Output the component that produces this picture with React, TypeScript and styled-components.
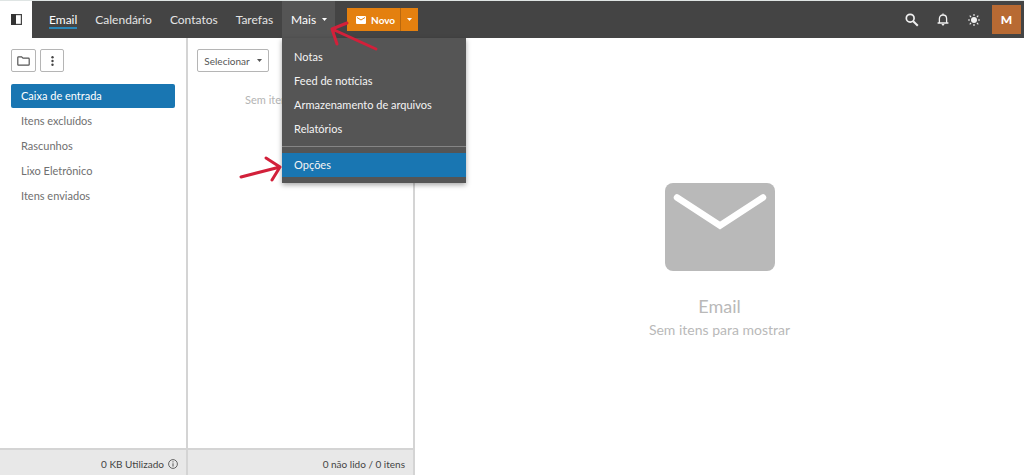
import React from "react";
import styled, { createGlobalStyle } from "styled-components";

const GlobalStyle = createGlobalStyle`
  * { box-sizing: border-box; }
  body {
    margin: 0;
    background: #fff;
    color: #666;
    font-family: Lato, "Open Sans", sans-serif;
    font-size: 11px;
    line-height: 16px;
  }
  button { font: inherit; margin: 0; padding: 0; border: 0; background: none; color: inherit; }
  ul { list-style: none; margin: 0; padding: 0; }
  a { color: inherit; text-decoration: none; }
  h2, p { margin: 0; font-weight: 400; }
  svg { display: block; flex: none; }
`;

const Page = styled.div`
  position: relative;
  display: flex;
  flex-direction: column;
  min-height: 100vh;
  border-top: 1px solid #dfe5e4;
`;

const TopBar = styled.header`
  display: flex;
  align-items: stretch;
  height: 37px;
  background: #444;
  color: #e8e8e8;
`;

const PanelToggle = styled.button`
  display: flex;
  align-items: center;
  justify-content: center;
  width: 32px;
  background: #fff;
`;

const MainNav = styled.nav`
  display: flex;
  align-items: center;
  gap: 18px;
  padding-left: 17px;
  font-size: 12px;
`;

const NavLink = styled.a<{ $active?: boolean }>`
  line-height: 14px;
  padding-top: 2px;
  color: ${(p) => (p.$active ? "#fff" : "#e4e4e4")};
  border-bottom: 2px solid ${(p) => (p.$active ? "#2a86b8" : "transparent")};
`;

const MoreWrap = styled.div`
  position: relative;
  margin-left: 9px;
`;

const MoreButton = styled.button`
  display: flex;
  align-items: center;
  gap: 6px;
  width: 53px;
  height: 37px;
  padding-left: 9px;
  background: #555;
  color: #fff;
  font-size: 12px;
`;

const Menu = styled.ul`
  position: absolute;
  z-index: 2;
  top: 37px;
  left: 0;
  width: 184px;
  background: #555;
  color: #f4f4f4;
  box-shadow: 0 2px 5px rgba(0, 0, 0, 0.35);
  && { padding: 7px 0 6px; }
`;

const MenuItem = styled.li<{ $selected?: boolean }>`
  background: ${(p) => (p.$selected ? "#1976b2" : "transparent")};
`;

const MenuLink = styled.a`
  display: block;
  padding: 4px 12px;
`;

const MenuDivider = styled.li`
  height: 1px;
  margin: 5px 0 6px;
  background: #858585;
`;

const NewGroup = styled.div`
  display: flex;
  align-self: center;
  height: 23px;
  margin-left: 12px;
  background: #e4800f;
  color: #fff;
`;

const NewButton = styled.button`
  display: flex;
  align-items: center;
  gap: 5px;
  width: 53px;
  padding-left: 9px;
  font-weight: 700;
  font-size: 10px;
`;

const NewMore = styled.button`
  display: flex;
  align-items: center;
  justify-content: center;
  width: 18px;
  border-left: 1px solid #b9680e;
`;

const Tools = styled.div`
  display: flex;
  align-items: center;
  margin-left: auto;
  padding-right: 3px;
`;

const ToolButton = styled.button`
  display: flex;
  align-items: center;
  justify-content: center;
  width: 31px;
  height: 28px;
  color: #f0f0f0;
`;

const Avatar = styled.button`
  width: 29px;
  height: 29px;
  margin-left: 3px;
  background: #b86a33;
  color: #fff;
  font-size: 12px;
  font-weight: 900;
`;

const Body = styled.div`
  display: flex;
  flex: 1;
`;

const Column = styled.section<{ $width: number }>`
  display: flex;
  flex-direction: column;
  flex: none;
  width: ${(p) => p.$width}px;
  border-right: 2px solid #d4d4d4;
`;

const Toolbar = styled.div<{ $inset: number }>`
  display: flex;
  gap: 4px;
  padding: 11px ${(p) => p.$inset}px 12px;
`;

const OutlineButton = styled.button`
  display: flex;
  align-items: center;
  justify-content: center;
  gap: 7px;
  min-width: 24px;
  height: 23px;
  padding: 0 5px;
  border: 1px solid #b5b5b5;
  border-radius: 2px;
  color: #555;
`;

const SelectButton = styled(OutlineButton)`
  width: 72px;
  font-size: 10px;
`;

const FolderList = styled.ul`
  display: flex;
  flex-direction: column;
  gap: 1px;
  && { padding: 0 11px; }
`;

const Folder = styled.a<{ $active?: boolean }>`
  display: block;
  padding: 4px 10px;
  border-radius: 2px;
  background: ${(p) => (p.$active ? "#1976b2" : "transparent")};
  color: ${(p) => (p.$active ? "#fff" : "#707070")};
`;

const EmptyList = styled.p`
  && { margin-top: 8px; }
  text-align: center;
  color: #b4b4b4;
`;

const StatusBar = styled.footer`
  display: flex;
  align-items: center;
  justify-content: flex-end;
  gap: 4px;
  height: 27px;
  margin-top: auto;
  padding: 2px 8px 0;
  border-top: 2px solid #d4d4d4;
  background: #e8e8e8;
  color: #444;
  font-size: 10px;
`;

const Preview = styled.main`
  display: flex;
  flex: 1;
  flex-direction: column;
  align-items: center;
  justify-content: center;
  padding-top: 12px;
  color: #b9b9b9;
`;

const PreviewTitle = styled.h2`
  && { margin-top: 23px; }
  font-size: 18px;
  line-height: 24px;
`;

const PreviewText = styled.p`
  font-size: 14px;
  line-height: 24px;
`;

const Arrows = styled.svg`
  position: absolute;
  z-index: 3;
  top: 19px;
  left: 236px;
  pointer-events: none;
`;

const Caret = () => (
  <svg width="5" height="3" viewBox="0 0 5 3" aria-hidden="true">
    <path d="M0 0h5L2.5 3z" fill="currentColor" />
  </svg>
);

const Envelope = () => (
  <svg width="110" height="88" viewBox="0 0 110 88" aria-hidden="true">
    <rect width="110" height="88" rx="8" fill="currentColor" />
    <path d="M12 14.500L55 42.500L98 14.500" fill="none" stroke="#fff" strokeWidth="6.500" strokeLinecap="round" />
  </svg>
);

const navItems = ["Email", "Calendário", "Contatos", "Tarefas"];
const menuItems = ["Notas", "Feed de notícias", "Armazenamento de arquivos", "Relatórios"];
const folders = ["Caixa de entrada", "Itens excluídos", "Rascunhos", "Lixo Eletrônico", "Itens enviados"];

export default function App() {
  return (
    <Page>
      <GlobalStyle />
      <TopBar>
        <PanelToggle aria-label="Painel">
          <svg width="11" height="11" viewBox="0 0 11 11">
            <rect x=".6" y=".6" width="9.800" height="9.800" fill="#fff" stroke="#444" strokeWidth="1.200" />
            <rect width="5" height="11" fill="#333" />
          </svg>
        </PanelToggle>
        <MainNav>
          {navItems.map((item, i) => (
            <NavLink key={item} href="#" $active={i === 0}>{item}</NavLink>
          ))}
        </MainNav>
        <MoreWrap>
          <MoreButton aria-expanded="true">Mais <Caret /></MoreButton>
          <Menu>
            {menuItems.map((item) => (
              <MenuItem key={item}><MenuLink href="#">{item}</MenuLink></MenuItem>
            ))}
            <MenuDivider role="separator" />
            <MenuItem $selected><MenuLink href="#">Opções</MenuLink></MenuItem>
          </Menu>
        </MoreWrap>
        <NewGroup>
          <NewButton>
            <svg width="10" height="8" viewBox="0 0 10 8">
              <rect width="10" height="8" rx="1" fill="#fff" />
              <path d="M1 1.500L5 4L9 1.500" fill="none" stroke="#e4800f" strokeWidth="1" />
            </svg>
            Novo
          </NewButton>
          <NewMore aria-label="Mais opções de criação"><Caret /></NewMore>
        </NewGroup>
        <Tools>
          <ToolButton aria-label="Pesquisar">
            <svg width="14" height="14" viewBox="0 0 14 14" fill="none" stroke="currentColor">
              <circle cx="5.200" cy="5.200" r="3.900" strokeWidth="1.700" />
              <path d="M8.200 8.200L12.800 12.800" strokeWidth="2" />
            </svg>
          </ToolButton>
          <ToolButton aria-label="Notificações">
            <svg width="12" height="13" viewBox="0 0 12 13" fill="none" stroke="currentColor" strokeWidth="1.300">
              <path d="M.6 10h10.800M2.400 10V5.800C2.400 3.500 3.900 2 6 2s3.600 1.500 3.600 3.800V10M6 .4V2" />
              <path d="M4.400 11h3.200L6 12.900z" fill="currentColor" stroke="none" />
            </svg>
          </ToolButton>
          <ToolButton aria-label="Tema">
            <svg width="12" height="12" viewBox="0 0 12 12" stroke="currentColor" strokeWidth="1.100">
              <circle cx="6" cy="6" r="3" fill="currentColor" stroke="none" />
              <path d="M6 0v2M6 10v2M0 6h2M10 6h2M1.700 1.700l1.400 1.400M8.900 8.900l1.400 1.400M10.300 1.700L8.900 3.100M3.100 8.900l-1.400 1.400" />
            </svg>
          </ToolButton>
          <Avatar>M</Avatar>
        </Tools>
      </TopBar>
      <Body>
        <Column $width={188}>
          <Toolbar $inset={11}>
            <OutlineButton aria-label="Pastas">
              <svg width="13" height="10" viewBox="0 0 13 10" fill="none" stroke="#555" strokeWidth="1.200">
                <path d="M1.600 .8H4.600L6 2.200H11.400Q12.200 2.200 12.200 3V8.400Q12.200 9.200 11.400 9.200H1.600Q.8 9.200 .8 8.400V1.600Q.8 .8 1.600 .8Z" />
              </svg>
            </OutlineButton>
            <OutlineButton aria-label="Mais ações">
              <svg width="3" height="10" viewBox="0 0 3 10" fill="#444">
                <circle cx="1.500" cy="1.300" r="1.200" /><circle cx="1.500" cy="5" r="1.200" /><circle cx="1.500" cy="8.700" r="1.200" />
              </svg>
            </OutlineButton>
          </Toolbar>
          <FolderList>
            {folders.map((name, i) => (
              <li key={name}><Folder href="#" $active={i === 0}>{name}</Folder></li>
            ))}
          </FolderList>
          <StatusBar>
            0 KB Utilizado
            <svg width="10" height="10" viewBox="0 0 10 10" fill="none" stroke="#555">
              <circle cx="5" cy="5" r="4.400" strokeWidth=".9" />
              <path d="M5 4.300V7.600M5 2.300V3.400" strokeWidth="1" />
            </svg>
          </StatusBar>
        </Column>
        <Column $width={227}>
          <Toolbar $inset={9}>
            <SelectButton>Selecionar <Caret /></SelectButton>
          </Toolbar>
          <EmptyList>Sem itens para mostrar</EmptyList>
          <StatusBar>0 não lido / 0 itens</StatusBar>
        </Column>
        <Preview>
          <Envelope />
          <PreviewTitle>Email</PreviewTitle>
          <PreviewText>Sem itens para mostrar</PreviewText>
        </Preview>
      </Body>
      <Arrows width="146" height="166" viewBox="0 0 146 166" fill="none" stroke="#d2203a" strokeWidth="3" strokeLinecap="round" strokeLinejoin="round" aria-hidden="true">
        <path d="M140 29L96 9M111 3L96 9L101 24" />
        <path d="M5 157L44 147M30 138L44 147L36 160" />
      </Arrows>
    </Page>
  );
}
